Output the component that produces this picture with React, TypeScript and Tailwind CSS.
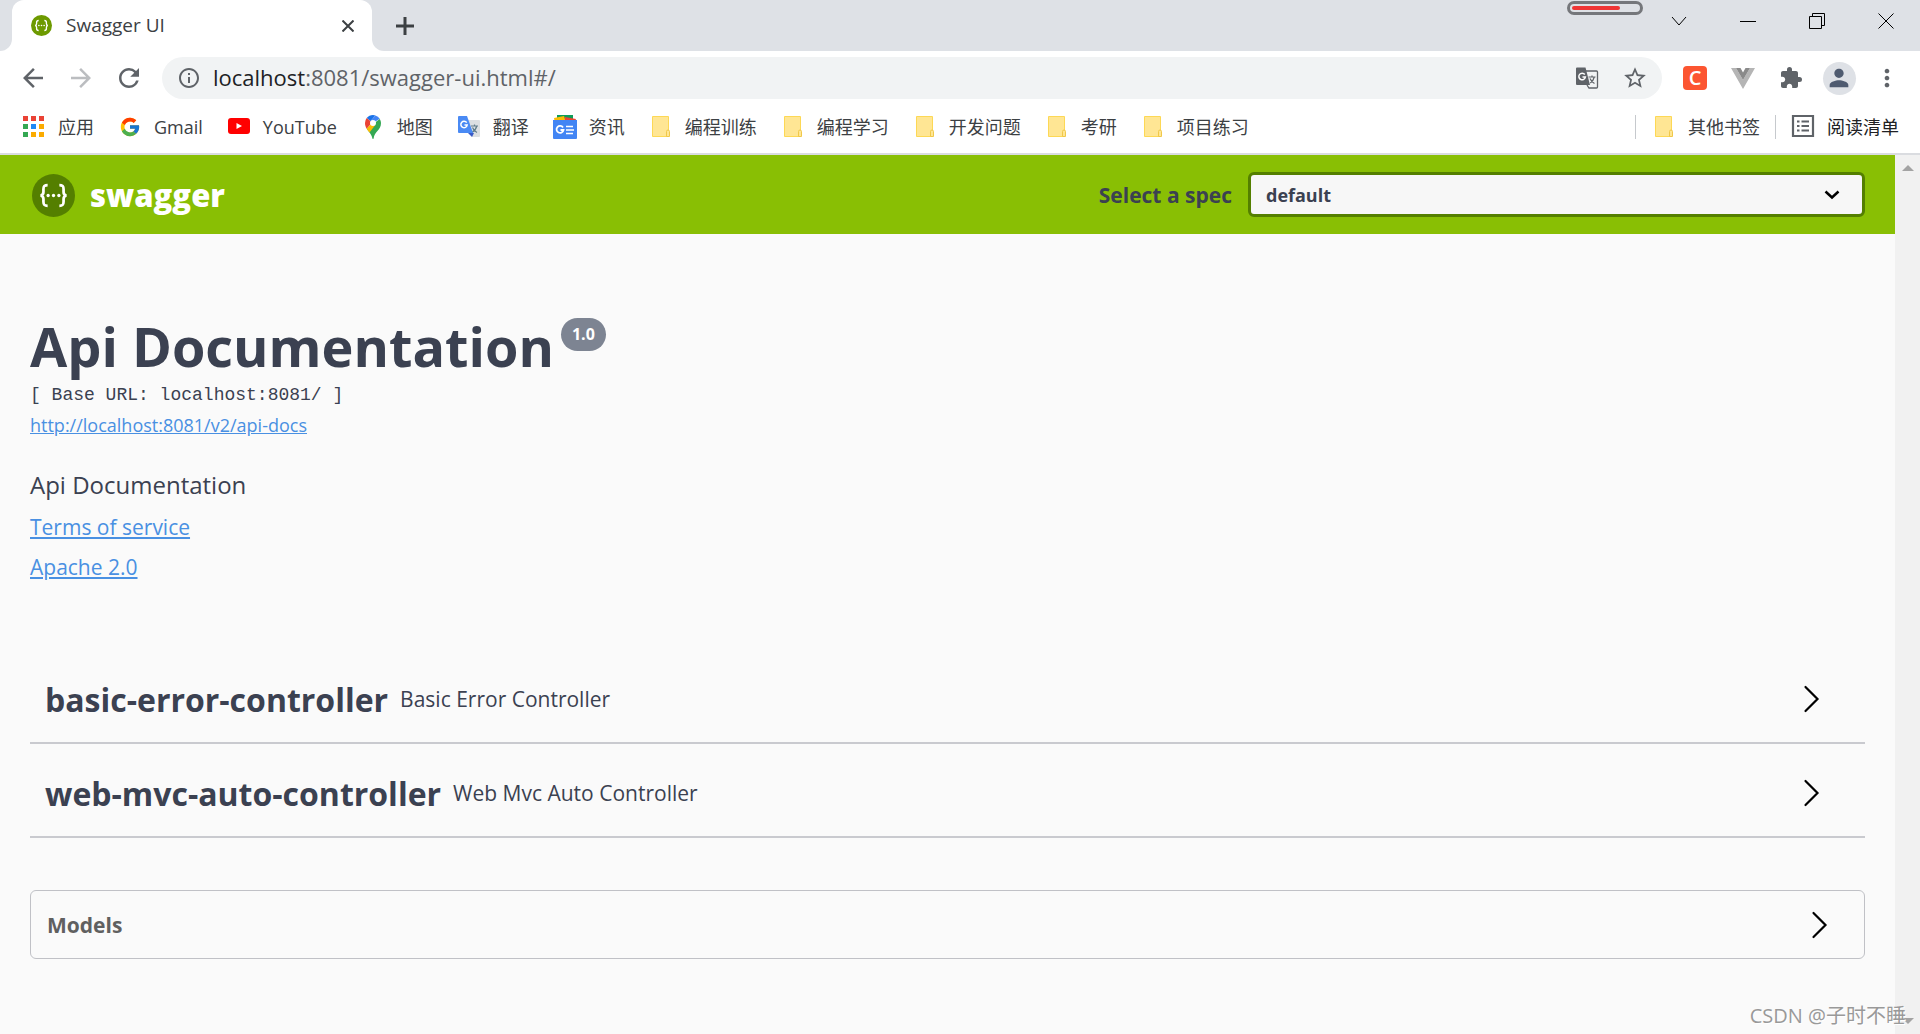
import React from 'react';
import { FcGoogle } from 'react-icons/fc';
import { MdArrowBack, MdArrowForward, MdExtension, MdMoreVert, MdPerson, MdRefresh, MdStarBorder, MdInfoOutline } from 'react-icons/md';

const FolderIcon = () => (
  <svg viewBox="0 0 24 24" className="h-6 w-6">
    <path d="M3.500 1.500h16v20h-16z" fill="#ffe694" stroke="#fdd855" />
    <path d="M17.500 21.500v-5a1.500 1.500 0 0 1 3 0v5z" fill="#ffe694" stroke="#f0c84a" />
  </svg>
);

const AppsIcon = () => {
  const colors = ['#ea4335', '#ea4335', '#ea4335', '#34a853', '#1e88f5', '#fbab00', '#34a853', '#fbab00', '#fbab00'];
  return (
    <svg viewBox="0 0 24 24" className="h-6 w-6">
      {colors.map((c, i) => (
        <rect key={i} x={1 + (i % 3) * 8} y={1 + Math.floor(i / 3) * 8} width="5" height="5" fill={c} />
      ))}
    </svg>
  );
};

const YouTubeIcon = () => (
  <svg viewBox="0 0 24 24" className="h-6 w-6">
    <rect x="1" y="3" width="22" height="16" rx="3" fill="#f00" />
    <path d="M9.500 8v6l5.500-3z" fill="#fff" />
  </svg>
);

const MapsIcon = () => (
  <svg viewBox="0 0 24 24" className="h-6 w-6">
    <path d="M12 0a8 8 0 0 0-6.300 3.100l3.800 3.200L14.400.4A8 8 0 0 0 12 0z" fill="#1a73e8" />
    <path d="M5.700 3.100A8 8 0 0 0 4 8c0 2.300.7 4.100 1.700 5.800l9-10.400-5.200 2.900z" fill="#ea4335" />
    <path d="M14.400.4 9.500 6.300 12 8l6.800-4.200A8 8 0 0 0 14.400.4z" fill="#4285f4" />
    <path d="M5.700 13.800 18.800 3.900A8 8 0 0 1 20 8c0 7-6.500 8.500-7.400 15.500-.2.700-1 .7-1.200 0-.8-4.500-3.900-6.800-5.700-9.700z" fill="#34a853" />
    <path d="M5.700 13.800 9.700 9.200l4.600.8-5.800 7.600c-1-1.300-2-2.400-2.800-3.800z" fill="#fbbc04" />
    <circle cx="12" cy="8" r="3" fill="#fff" />
  </svg>
);

const TranslateIcon = () => (
  <svg viewBox="0 0 24 24" className="h-6 w-6">
    <path d="M10 5h12a1 1 0 0 1 1 1v15a1 1 0 0 1-1 1h-7z" fill="#dcdfe2" />
    <path d="M14 11h7M17.500 9.500V11M19.800 11c-.7 3-2.500 5-5 6.500M15.500 12.500c1 2.500 2.500 4 4.500 5" stroke="#607d8b" strokeWidth="1.200" fill="none" />
    <path d="m11 18 4 4 2-4z" fill="#3a5bc7" />
    <path d="M2 1h8l6 17H2a1 1 0 0 1-1-1V2a1 1 0 0 1 1-1z" fill="#4a8af4" />
    <path d="M9.700 7.700A3.200 3.200 0 1 0 10.200 10H7.500" stroke="#fff" strokeWidth="1.500" fill="none" />
  </svg>
);

const NewsIcon = () => (
  <svg viewBox="0 0 24 24" className="h-6 w-6">
    <path d="M4 0h16v8H4z" fill="#0f9d58" />
    <path d="m1 3 10-2 2 7H2z" fill="#fbbc04" />
    <path d="m12 2 11 2-2 5h-9z" fill="#ea4335" />
    <path d="M0 5h24v18a1 1 0 0 1-1 1H1a1 1 0 0 1-1-1z" fill="#4285f4" />
    <path d="M10 12.500A3.500 3.500 0 1 0 10.500 15H7.500" stroke="#fff" strokeWidth="1.800" fill="none" />
    <path d="M13 11.500h7M13 15h8M13 18.500h7" stroke="#fff" strokeWidth="1.600" />
  </svg>
);

const PageTranslateIcon = () => (
  <svg viewBox="0 0 24 24" className="h-6 w-6">
    <path d="M11 5h10.500a1 1 0 0 1 1 1v15a1 1 0 0 1-1 1H14l-2-3" stroke="#5f6368" strokeWidth="1.300" fill="none" />
    <path d="M13.500 11h7M17 9.500V11M19.300 11c-.7 3-2 4.500-4 6M15 12.500c1 2.500 2.500 4 4.500 5" stroke="#5f6368" strokeWidth="1.200" fill="none" />
    <path d="M2 1.500h8.500L15 19H2a1 1 0 0 1-1-1V2.500a1 1 0 0 1 1-1z" fill="#5f6368" />
    <path d="M9.800 8.500A3.300 3.300 0 1 0 10.400 11H7.500" stroke="#fff" strokeWidth="1.500" fill="none" />
  </svg>
);

const SwaggerMark = ({ className, bg, fg }: { className: string; bg: string; fg: string }) => (
  <svg viewBox="0 0 44 44" className={className}>
    <circle cx="22" cy="22" r="22" fill={bg} />
    <path
      d="M16 11.500c-3.500 0-4.300 1-4.300 4v3c0 2-.8 3.200-3 3.500 2.200.3 3 1.500 3 3.500v3c0 3 .8 4 4.300 4M28 11.500c3.500 0 4.300 1 4.300 4v3c0 2 .8 3.200 3 3.500-2.200.3-3 1.500-3 3.500v3c0 3-.8 4-4.300 4"
      stroke={fg}
      strokeWidth="2.800"
      fill="none"
    />
    <circle cx="16.500" cy="22" r="1.700" fill={fg} />
    <circle cx="22" cy="22" r="1.700" fill={fg} />
    <circle cx="27.500" cy="22" r="1.700" fill={fg} />
  </svg>
);

const ListIcon = () => (
  <svg viewBox="0 0 24 24" className="h-6 w-6" fill="none" stroke="#5f6368" strokeWidth="2.200">
    <path d="M2 1h20v20H2z" />
    <path d="M6 6.500h2.500M6 11h2.500M6 15.500h2.500M10.500 6.500H18M10.500 11H18M10.500 15.500H18" />
  </svg>
);

const ArrowIcon = () => (
  <svg viewBox="0 0 30 30" className="h-[30px] w-[30px]" fill="none" stroke="#000" strokeWidth="2.200" strokeLinecap="round">
    <path d="m9.500 2 12 12-12 12" />
  </svg>
);

const bookmarks = [
  { label: '应用', icon: <AppsIcon /> },
  { label: 'Gmail', icon: <FcGoogle className="h-[22px] w-[22px]" /> },
  { label: 'YouTube', icon: <YouTubeIcon /> },
  { label: '地图', icon: <MapsIcon /> },
  { label: '翻译', icon: <TranslateIcon /> },
  { label: '资讯', icon: <NewsIcon /> },
  { label: '编程训练', icon: <FolderIcon /> },
  { label: '编程学习', icon: <FolderIcon /> },
  { label: '开发问题', icon: <FolderIcon /> },
  { label: '考研', icon: <FolderIcon /> },
  { label: '项目练习', icon: <FolderIcon /> },
];

const controllers = [
  { name: 'basic-error-controller', description: 'Basic Error Controller' },
  { name: 'web-mvc-auto-controller', description: 'Web Mvc Auto Controller' },
];

const Bookmark = ({ label, icon }: { label: string; icon: React.ReactNode }) => (
  <button className="flex items-center gap-3 whitespace-nowrap">
    <span className="flex h-6 w-6 items-center justify-center">{icon}</span>
    {label}
  </button>
);

const ToolButton = ({ label, children }: { label: string; children: React.ReactNode }) => (
  <button aria-label={label} className="flex h-10 w-12 shrink-0 items-center justify-center text-[#5f6368]">
    {children}
  </button>
);

const WindowButton = ({ label, children }: { label: string; children: React.ReactNode }) => (
  <button aria-label={label} className="flex h-[42px] w-[69px] items-center justify-center">
    <svg viewBox="0 0 16 16" className="h-4 w-4" fill="none" stroke="#000">
      {children}
    </svg>
  </button>
);

const TabStrip = () => (
  <div className="flex h-[51px] bg-[#dee1e6]">
    <div className="flex w-3 items-end bg-white">
      <div className="h-full w-full rounded-br-xl bg-[#dee1e6]" />
    </div>
    <div className="bg-[#dee1e6]">
      <div className="flex h-full w-[360px] items-center rounded-t-xl bg-white pr-3 pl-[19px] text-[#3c4043]">
        <SwaggerMark className="h-[21px] w-[21px]" bg="#6d9a00" fg="#fff" />
        <span className="ml-[14px] flex-1 text-[19px]">Swagger UI</span>
        <button aria-label="Close tab" className="flex h-6 w-6 items-center justify-center">
          <svg viewBox="0 0 12 12" className="h-3 w-3" stroke="#3c4043" strokeWidth="2">
            <path d="m.5.5 11 11M11.500.5l-11 11" />
          </svg>
        </button>
      </div>
    </div>
    <div className="w-3 bg-white">
      <div className="h-full w-full rounded-bl-xl bg-[#dee1e6]" />
    </div>
    <button aria-label="New tab" className="flex w-[42px] items-center justify-center">
      <svg viewBox="0 0 18 18" className="h-[18px] w-[18px]" stroke="#3c4043" strokeWidth="3">
        <path d="M9 0v18M0 9h18" />
      </svg>
    </button>
    <div className="flex-1" />
    <svg viewBox="0 0 76 14" className="mt-px mr-px h-[14px] w-[76px]">
      <rect x="1.500" y="1.500" width="73" height="11" rx="5.500" fill="#dee1e6" stroke="#75777b" strokeWidth="3" />
      <rect x="5" y="5" width="48" height="4" rx="2" fill="#ef3535" />
    </svg>
    <WindowButton label="Search tabs">
      <path d="m1 4 7 8 7-8" />
    </WindowButton>
    <WindowButton label="Minimize">
      <path d="M0 8.500h16" />
    </WindowButton>
    <WindowButton label="Restore">
      <path d="M.5 3.500h12v12H.5zM3.500 3.500v-3h12v12h-3" />
    </WindowButton>
    <WindowButton label="Close">
      <path d="m.5.5 15 15M15.500.5l-15 15" />
    </WindowButton>
  </div>
);

const Toolbar = () => (
  <div className="flex h-[54px] items-center bg-white px-[9px]">
    <ToolButton label="Back"><MdArrowBack className="h-[30px] w-[30px]" /></ToolButton>
    <ToolButton label="Forward"><MdArrowForward className="h-[30px] w-[30px] text-[#bbbdc0]" /></ToolButton>
    <ToolButton label="Reload"><MdRefresh className="h-[30px] w-[30px]" /></ToolButton>
    <div className="mx-[9px] flex h-[42px] flex-1 items-center rounded-full bg-[#f1f3f4] pr-[3px] pl-[15px]">
      <MdInfoOutline className="h-6 w-6 text-[#5f6368]" />
      <p className="ml-3 flex-1 pb-0.5 text-[22px] text-[#5f6368]">
        <span className="text-[#202124]">localhost</span>:8081/swagger-ui.html#/
      </p>
      <ToolButton label="Translate this page"><PageTranslateIcon /></ToolButton>
      <ToolButton label="Bookmark this tab"><MdStarBorder className="h-[26px] w-[26px]" /></ToolButton>
    </div>
    <ToolButton label="C extension">
      <span className="flex h-6 w-6 items-center justify-center rounded bg-[#fc5531] text-xl font-semibold text-white">C</span>
    </ToolButton>
    <ToolButton label="Vue devtools">
      <svg viewBox="0 0 24 21" className="h-[21px] w-6">
        <path d="M0 0h5l7 12 7-12h5L12 21z" fill="#b5b5b5" />
        <path d="M5 0h4.500L12 4.500 14.500 0H19l-7 12z" fill="#8a8a8a" />
      </svg>
    </ToolButton>
    <ToolButton label="Extensions"><MdExtension className="h-6 w-6" /></ToolButton>
    <ToolButton label="Profile">
      <span className="flex h-[33px] w-[33px] items-center justify-center rounded-full bg-[#dee1e6] text-[#4f5b70]">
        <MdPerson className="h-7 w-7" />
      </span>
    </ToolButton>
    <ToolButton label="Menu"><MdMoreVert className="h-7 w-7" /></ToolButton>
  </div>
);

const BookmarksBar = () => (
  <div className="flex h-[50px] items-center border-b-2 border-[#dadce0] bg-white pr-[21px] pb-1 pl-[22px] text-lg text-[#3c4043]">
    <div className="flex flex-1 gap-6">
      {bookmarks.map((b) => (
        <Bookmark key={b.label} {...b} />
      ))}
    </div>
    <div className="flex items-center">
      <div className="mr-4 h-6 w-px bg-[#c6c9cd]" />
      <Bookmark label="其他书签" icon={<FolderIcon />} />
      <div className="mx-[15px] h-6 w-px bg-[#c6c9cd]" />
      <div className="text-[#202124]">
        <Bookmark label="阅读清单" icon={<ListIcon />} />
      </div>
    </div>
  </div>
);

const Topbar = () => (
  <div className="flex h-[79px] items-center justify-between bg-[#89bf04] pr-[30px] pl-8">
    <a href="#/" className="flex items-center gap-[15px] pt-0.5 text-[31px] font-extrabold text-white">
      <SwaggerMark className="h-[43px] w-[43px]" bg="#547f00" fg="#fff" />
      swagger
    </a>
    <div className="flex items-center">
      <label htmlFor="spec" className="mr-4 pt-0.5 text-[21px] font-bold text-[#3b4151]">Select a spec</label>
      <div className="relative">
        <select
          id="spec"
          className="h-[45px] w-[617px] appearance-none rounded-md border-3 border-[#547f00] bg-[#f7f7f7] px-[15px] text-lg font-bold text-[#3b4151]"
        >
          <option>default</option>
        </select>
        <svg viewBox="0 0 16 10" className="pointer-events-none absolute top-[18px] right-[25px] h-[10px] w-4" fill="none" stroke="#000" strokeWidth="2.500">
          <path d="m1.500 1.500 6.500 6 6.500-6" />
        </svg>
      </div>
    </div>
  </div>
);

const Info = () => (
  <section className="pt-[75px] text-[#3b4151]">
    <div className="flex items-start gap-[7px]">
      <h1 className="text-[54px] leading-[74px] font-bold">Api Documentation</h1>
      <span className="mt-[9px] rounded-full bg-[#7d8492] px-[11px] text-base leading-[33px] font-bold text-white">1.0</span>
    </div>
    <pre className="font-['Liberation_Mono',monospace] text-lg leading-6">[ Base URL: localhost:8081/ ]</pre>
    <a href="#/v2/api-docs" className="mt-[6px] block text-lg leading-[25px] text-[#4990e2] underline">http://localhost:8081/v2/api-docs</a>
    <p className="mt-[30px] text-2xl leading-[33px]">Api Documentation</p>
    <a href="#/terms" className="mt-[10px] block text-[21px] leading-8 text-[#4990e2] underline">Terms of service</a>
    <a href="#/license" className="mt-2 block text-[21px] leading-8 text-[#4990e2] underline">Apache 2.0</a>
  </section>
);

const App: React.FC = () => {
  return (
    <div className="flex min-h-screen flex-col bg-[#fafafa] font-['Open_Sans','Noto_Sans_CJK_SC',sans-serif]">
      <header>
        <TabStrip />
        <Toolbar />
        <BookmarksBar />
      </header>

      <div className="relative flex flex-1">
        <main className="flex-1">
          <Topbar />
          <div className="px-[30px]">
            <Info />

            <section className="mt-[67px] text-[#3b4151]">
              {controllers.map((c) => (
                <button key={c.name} className="flex h-[94px] w-full items-center border-b-2 border-[#c9cacf] pt-2 pr-[39px] pl-[15px] text-left">
                  <span className="text-[32px] font-bold">{c.name}</span>
                  <span className="ml-3 flex-1 text-[21px]">{c.description}</span>
                  <ArrowIcon />
                </button>
              ))}
            </section>

            <section className="mt-[52px] rounded-md border border-[#c0c1c6]">
              <button className="flex h-[67px] w-full items-center justify-between pt-0.5 pr-[30px] pl-4 text-[21px] font-bold text-[#606060]">
                Models
                <ArrowIcon />
              </button>
            </section>
          </div>
        </main>

        <aside className="flex w-[25px] flex-col items-center justify-between bg-[#f1f1f1] py-[10px]">
          <svg viewBox="0 0 12 6" className="h-[6px] w-3"><path d="M0 6 6 0l6 6z" fill="#a3a3a3" /></svg>
          <svg viewBox="0 0 12 6" className="h-[6px] w-3"><path d="m0 0 6 6 6-6z" fill="#a3a3a3" /></svg>
        </aside>

        <p className="absolute right-[14px] bottom-1 text-xl text-[#999999] text-shadow-[1px_1px_0_#ffffff]">CSDN @子时不睡</p>
      </div>
    </div>
  );
};

export default App;
